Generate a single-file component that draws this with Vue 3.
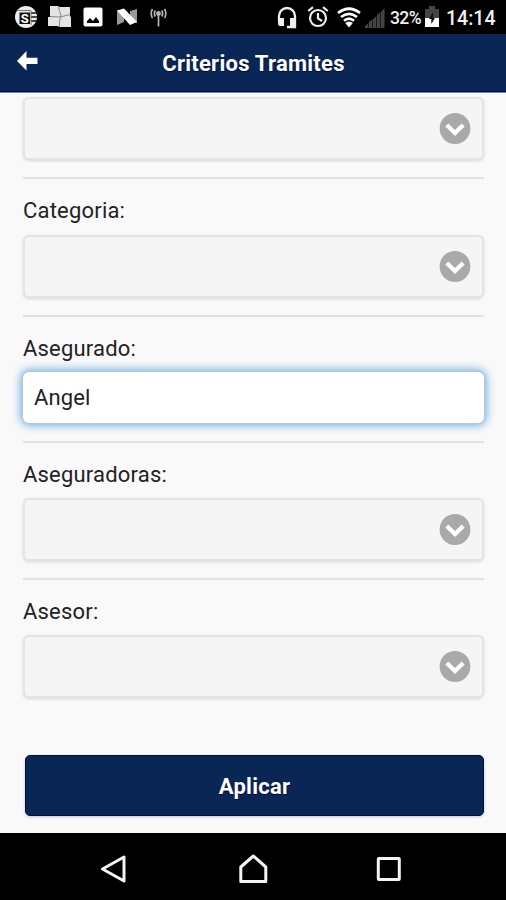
<script setup>
const fields = [
  { id: 'first', label: '', type: 'select' },
  { id: 'categoria', label: 'Categoria:', type: 'select' },
  { id: 'asegurado', label: 'Asegurado:', type: 'text', value: 'Angel' },
  { id: 'aseguradoras', label: 'Aseguradoras:', type: 'select' },
  { id: 'asesor', label: 'Asesor:', type: 'select' },
]
</script>

<template>
  <div class="screen">
    <div class="status">
      <div class="group">
        <svg width="24" height="24" viewBox="0 0 24 24">
          <circle cx="12" cy="12" r="11" fill="#eee" />
          <path d="M5.5 7.5H16V19H5.5Z" fill="#111" />
          <path d="M17 8H24M17 12H24M17 16H24" stroke="#111" stroke-width="1.4" />
          <path d="M4 5.5H17V20" fill="none" stroke="#777" stroke-width="1" />
          <text x="10.7" y="17.5" class="chip">S</text>
        </svg>
        <svg class="tiles" width="24" height="24" viewBox="0 0 24 24">
          <path d="M2 1H10L12 2H22V11L23 12V22H11L10 21H0V12H2Z" fill="#e4e4e4" />
          <path d="M10.5 1Q11 6 13 10Q11 16 11.5 22M2 11.5L12 12L22 9.5" fill="none" stroke="#888" stroke-width="1" />
        </svg>
        <svg class="photo" width="20" height="20" viewBox="0 0 20 20">
          <rect x=".5" y=".5" width="19" height="19" rx="2" fill="#fff" />
          <path d="M4 16V14L7 11L10 14L13 10L16 14V16Z" fill="#000" />
        </svg>
        <svg class="nletter" width="22" height="18" viewBox="0 0 22 18">
          <path d="M1 2L8 6V14L1 17ZM14 3L21 1V15L14 12Z" fill="#999" />
          <path d="M1 2.5L8 .5L21 14L14 17Z" fill="#fff" />
        </svg>
        <svg class="antenna" width="17" height="19" viewBox="0 0 17 19" fill="none" stroke="#b5b5b5" stroke-width="1.7">
          <path d="M8.5 6V18.5M5.2 2.5Q3.6 5.5 5.2 8.5M11.8 2.5Q13.4 5.5 11.8 8.5M2.5 1Q-.1 5.5 2.5 10M14.5 1Q17.1 5.5 14.5 10" />
          <circle cx="8.5" cy="5.5" r="1.6" fill="#b5b5b5" />
        </svg>
      </div>
      <div class="group right">
        <svg class="headset" width="20" height="24" viewBox="0 0 20 24">
          <path d="M2 15V10A8 8 0 0 1 18 10V21H10" fill="none" stroke="#eee" stroke-width="2.3" />
          <path d="M1 12H7V20H3Q1 20 1 17ZM13 12H19V20H13Z" fill="#eee" />
        </svg>
        <svg class="alarm" width="22" height="22" viewBox="0 0 22 22" fill="none" stroke="#eee" stroke-width="2.2">
          <circle cx="11" cy="12" r="8" />
          <path d="M11 7V12.5L15 15M1.2 5L6 1.2M20.8 5L16 1.2" />
        </svg>
        <svg class="wifi" width="24" height="21" viewBox="0 0 24 21" fill="none" stroke="#fff" stroke-width="2.7">
          <path d="M1 6Q12-2.5 23 6M4 10Q12 3.6 20 10M7 13.8Q12 9.5 17 13.8" />
          <path d="M8.2 16Q12 13 15.8 16L12 20.5Z" fill="#fff" stroke="none" />
        </svg>
        <svg class="signal" width="20" height="20" viewBox="0 0 20 20">
          <path d="M0 20V18L3.4 15V20ZM4 20V14L7.4 11V20ZM8 20V11L11.4 8V20ZM12 20V7L15.4 4V20ZM16 20V4L19.5 0V20Z" fill="#444" />
        </svg>
        <span class="percent">32%</span>
        <svg class="battery" width="14" height="22" viewBox="0 0 14 22">
          <path d="M0 3H4V0H10V3H14V12H0Z" fill="#444" />
          <path d="M0 12H14V21H0Z" fill="#fff" />
          <path d="M8 6L4 13H6.3V18L10 12H8Z" fill="#111" />
        </svg>
        <span class="clock">14:14</span>
      </div>
    </div>

    <header class="header">
      <svg class="back" width="22" height="20" viewBox="0 0 22 20">
        <path d="M0 10L9.5 0V6.7H20.5V13H9.5V19.5Z" fill="#fff" />
      </svg>
      <h1 class="title">Criterios Tramites</h1>
    </header>

    <main class="form">
      <div v-for="f in fields" :key="f.id" class="field" :class="f.id">
        <label v-if="f.label" class="label">{{ f.label }}</label>
        <div v-if="f.type === 'select'" class="select">
          <svg width="32" height="32" viewBox="0 0 32 32">
            <circle cx="16" cy="15.5" r="15.4" fill="#a9a9a9" />
            <path d="M7.8 12L16 20L24.2 12" fill="none" stroke="#fff" stroke-width="4.3" />
          </svg>
        </div>
        <div v-else class="input">{{ f.value }}</div>
      </div>
      <button class="apply">Aplicar</button>
    </main>

    <nav class="nav">
      <svg width="28" height="30" viewBox="0 0 28 30">
        <path d="M2.5 15L24 3V27Z" />
      </svg>
      <svg width="30" height="30" viewBox="0 0 30 30">
        <path d="M2.8 27.5V13L15.3 2L27.8 13V27.5Z" />
      </svg>
      <svg width="26" height="30" viewBox="0 0 26 30">
        <rect x="2.3" y="4.6" width="21" height="20.8" rx=".5" />
      </svg>
    </nav>
  </div>
</template>

<style>
body {
  margin: 0;
}
</style>

<style scoped>
.screen {
  width: 506px;
  height: 900px;
  display: flex;
  flex-direction: column;
  overflow: hidden;
  background: #f9f9f9;
  font-family: Roboto, sans-serif;
}
.status {
  height: 34px;
  flex: none;
  box-sizing: border-box;
  display: flex;
  justify-content: space-between;
  padding: 0 10px 0 14px;
  background: #000;
  color: #f0f0f0;
}
.group {
  display: flex;
  align-items: center;
}
.group svg {
  flex: none;
}
.chip {
  font: bold 13px Roboto, sans-serif;
  fill: #fff;
  text-anchor: middle;
}
.tiles { margin-left: 10px; }
.photo { margin-left: 11px; }
.nletter { margin-left: 13px; }
.antenna { margin-left: 12px; }
.headset { margin-top: 1px; }
.alarm { margin-left: 10px; }
.wifi { margin-left: 8px; }
.signal { margin-left: 4px; margin-top: 2px; }
.percent {
  width: 32px;
  margin-left: 5px;
  margin-top: 2px;
  font-size: 17.5px;
  font-weight: 500;
  letter-spacing: -0.6px;
}
.battery { margin-left: 3px; }
.clock {
  width: 50px;
  margin-left: 7px;
  margin-top: 2px;
  font-size: 19.5px;
  font-weight: 500;
}
.header {
  height: 59px;
  flex: none;
  box-sizing: border-box;
  display: grid;
  grid-template-columns: 60px 1fr 60px;
  align-items: center;
  background: #092654;
  border-bottom: 1px solid #7580a0;
  box-shadow: inset 0 -1px #001047;
}
.back {
  margin: -4px 0 0 17px;
}
.title {
  margin: 0;
  padding-left: 1px;
  text-align: center;
  color: #fff;
  font-size: 22px;
  font-weight: 700;
  letter-spacing: 0.25px;
  text-shadow: 0 1px 1px #000b35;
}
.form {
  height: 740px;
  flex: none;
  box-sizing: border-box;
  padding: 0 22px 0 23px;
}
.field {
  height: 137px;
  box-sizing: border-box;
  display: flex;
  flex-direction: column;
  border-bottom: 2px solid #e1e1e1;
}
.field.first {
  height: 86px;
  padding-top: 4px;
}
.field.categoria { height: 138px; }
.field.asegurado { height: 126px; }
.field.asesor {
  height: 119px;
  border-bottom: 0;
}
.label {
  height: 56px;
  flex: none;
  box-sizing: border-box;
  padding-top: 18px;
  font-size: 22px;
  line-height: 28px;
  letter-spacing: 0.2px;
  color: #222;
}
.select {
  height: 63px;
  flex: none;
  box-sizing: border-box;
  display: flex;
  align-items: center;
  justify-content: flex-end;
  padding-right: 11px;
  border: 2px solid #e4e4e4;
  border-radius: 6px;
  background: #f5f5f5;
  box-shadow: 0 1px 3px rgba(0, 0, 0, 0.14);
}
.aseguradoras .label,
.asesor .label {
  height: 55px;
}
.input {
  height: 51px;
  flex: none;
  box-sizing: border-box;
  margin-top: -1px;
  padding-left: 11px;
  border-radius: 6px;
  background: #fff;
  font-size: 22px;
  line-height: 52px;
  letter-spacing: 0.1px;
  color: #222;
  box-shadow: 0 0 0 1px #b5c8d8, 0 0 10px 2px #5fa9e0;
}
.apply {
  display: block;
  width: 459px;
  height: 61px;
  margin: 56px 0 0 2px;
  padding: 1px 0 0;
  border: 1px solid #001047;
  border-radius: 5px;
  background: #092654;
  color: #fff;
  font: 700 22px Roboto, sans-serif;
  letter-spacing: 0.25px;
  text-shadow: 0 1px 1px #000b35;
  box-shadow: 0 1px 3px rgba(0, 0, 0, 0.2);
}
.nav {
  height: 67px;
  flex: none;
  box-sizing: border-box;
  display: flex;
  gap: 110px;
  padding: 21px 0 0 100px;
  background: #000;
}
.nav svg {
  flex: none;
  fill: none;
  stroke: #f4f4f4;
  stroke-width: 3;
  stroke-linejoin: round;
}
.nav svg:last-child {
  margin-left: -2px;
}
</style>
